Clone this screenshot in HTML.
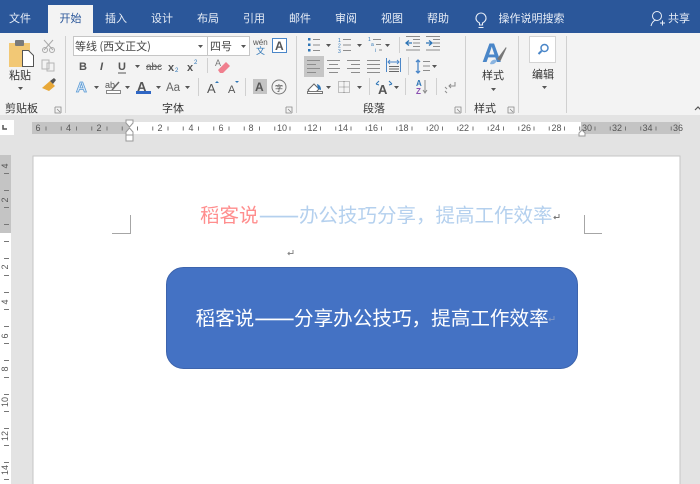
<!DOCTYPE html>
<html lang="zh-CN"><head><meta charset="utf-8"><title>Word</title>
<style>
html,body{margin:0;padding:0;width:700px;height:484px;overflow:hidden;background:#e3e3e3}
svg{display:block;position:absolute;left:0;top:0;filter:blur(.3px)}
text{font-family:"Liberation Sans","Noto Sans CJK SC",sans-serif;fill:#444;font-size:11px}
.cjk{font-family:"Noto Sans CJK SC","WenQuanYi Zen Hei",sans-serif}
.tab{fill:#e8eef7;font-size:11px;text-anchor:middle}
.lb{font-size:11px;fill:#333;text-anchor:middle}
.b{font-weight:bold;fill:#555}
.ln{stroke:#8c8c8c;stroke-width:1;fill:none}
.sep{stroke:#d0d0d0;stroke-width:1}
.bl{stroke:#4a86c8;stroke-width:1;fill:none}
.rl{font-size:9px;fill:#555;text-anchor:middle}
</style></head><body>
<svg width="700" height="484" viewBox="0 0 700 484" xmlns="http://www.w3.org/2000/svg">
<defs><path id="ar" d="M0 0h5l-2.500 3z" fill="#555"/>
<path id="dl" d="M0 0h6v6M0 0v6h6M2 2l3 3" fill="none" stroke="#888" stroke-width=".8"/></defs>
<rect width="700" height="484" fill="#e3e3e3"/>
<rect width="700" height="33" fill="#2b579a"/>
<rect y="33" width="700" height="82" fill="#f3f3f3"/>
<rect x="48" y="5" width="45" height="29" fill="#f3f3f3"/>
<g class="cjk">
<text class="tab cjk" x="20" y="22">文件</text>
<text class="tab cjk" x="70.500" y="22" style="fill:#2b579a">开始</text>
<text class="tab cjk" x="116" y="22">插入</text>
<text class="tab cjk" x="162" y="22">设计</text>
<text class="tab cjk" x="208" y="22">布局</text>
<text class="tab cjk" x="254" y="22">引用</text>
<text class="tab cjk" x="300" y="22">邮件</text>
<text class="tab cjk" x="346" y="22">审阅</text>
<text class="tab cjk" x="392" y="22">视图</text>
<text class="tab cjk" x="438" y="22">帮助</text>
<text class="tab cjk" x="531.500" y="22">操作说明搜索</text>
<text class="tab cjk" x="679" y="22">共享</text>
</g>
<path d="M481 25h-1.500v-2c-6-3-3.500-10 1.500-10s7.500 7 1.500 10v2z M478.500 27.500h5" fill="none" stroke="#e8eef7" stroke-width="1.100"/>
<circle cx="657" cy="16" r="4.500" fill="none" stroke="#e8eef7"/>
<path d="M651 26c1-4 3-5.500 5-6M660 23h5M662.500 20.500v5" fill="none" stroke="#e8eef7"/>

<!-- group separators -->
<path class="sep" d="M65.500 36v77M296.500 36v77M465.500 36v77M518.500 36v77M566.500 36v77"/>
<!-- clipboard -->
<rect x="9" y="43" width="21" height="24" fill="#f2c875"/>
<rect x="15" y="40" width="9" height="6" rx="1" fill="#7a7a7a"/>
<path d="M22.500 50.500h6l5 5v11h-11z" fill="#fff" stroke="#555"/>
<text class="lb cjk" x="20" y="79">粘贴</text>
<use href="#ar" x="18" y="87"/>
<path d="M44 40l9 10M53 40l-9 10" stroke="#aaa" fill="none"/><circle cx="45" cy="50" r="2.500" fill="none" stroke="#aaa"/><circle cx="52" cy="50" r="2.500" fill="none" stroke="#aaa"/>
<path d="M42 60h7v9h-7zM47 63h7v8h-7z" fill="#f3f3f3" stroke="#b5b5b5"/>
<path d="M42 88l8-7 5 5-6 5z" fill="#e8a838"/><path d="M50 81l4-3 2 2-3 4z" fill="#555"/>
<text class="lb cjk" x="21.500" y="112">剪贴板</text>
<use href="#dl" x="55" y="107"/>
<!-- font group -->
<rect x="73.500" y="36.500" width="134" height="19" fill="#fff" stroke="#c6c6c6"/>
<rect x="207.500" y="36.500" width="42" height="19" fill="#fff" stroke="#c6c6c6"/>
<text class="cjk" x="75" y="50" style="font-size:11px">等线 (西文正文)</text>
<text class="cjk" x="210" y="50" style="font-size:11px">四号</text>
<use href="#ar" x="198" y="45"/><use href="#ar" x="241" y="45"/>
<text x="253" y="45" style="font-size:8px;fill:#555">wén</text>
<text class="cjk" x="256" y="54" style="font-size:9px;fill:#2e75b6">文</text>
<rect x="272.500" y="38.500" width="14" height="14" fill="#fff" stroke="#4a86c8"/>
<text x="275" y="50" class="b" style="font-size:12px">A</text>
<text class="b" x="79" y="70">B</text>
<text x="100" y="70" style="font-style:italic;font-weight:bold;fill:#555">I</text>
<text class="b" x="118" y="70">U</text><path d="M118 73h8" stroke="#555"/>
<use href="#ar" x="135" y="65"/>
<text x="146" y="70" style="font-size:10px;fill:#555">abc</text><path d="M146 66.500h15" stroke="#666"/>
<text class="b" x="168" y="71">x</text><text x="175" y="72" style="font-size:6px;fill:#2e75b6">2</text>
<text class="b" x="187" y="71">x</text><text x="194" y="64" style="font-size:6px;fill:#2e75b6">2</text>
<path class="sep" d="M207.500 58v15"/>
<text x="215" y="66" style="font-size:9px;fill:#777">A</text>
<path d="M218 70l8-8 4 4-7 7h-3z" fill="#f07f8e"/>
<text x="76" y="92" style="font-size:15px;font-weight:bold;fill:#dce9f7;stroke:#5b9bd5;stroke-width:.8">A</text>
<use href="#ar" x="94" y="86"/>
<text x="105" y="88" style="font-size:9px;fill:#555">ab</text><path d="M112 90l7-8" stroke="#666" stroke-width="1.500"/>
<rect x="106.500" y="90.500" width="14" height="3" fill="#fff" stroke="#888"/>
<use href="#ar" x="125" y="86"/>
<text x="137" y="91" class="b" style="font-size:13px">A</text><rect x="136" y="91" width="15" height="3" fill="#2f66c4"/>
<use href="#ar" x="156" y="86"/>
<text x="166" y="91" style="font-size:11.500px;fill:#666">Aa</text>
<use href="#ar" x="185" y="86"/>
<path class="sep" d="M198.500 78v18"/>
<text x="207" y="93" style="font-size:13px;fill:#555">A</text><path d="M215 83l2-2 2 2z" fill="#2e75b6"/>
<text x="228" y="93" style="font-size:11px;fill:#555">A</text><path d="M235 81h4l-2 2z" fill="#2e75b6"/>
<path class="sep" d="M245.500 78v18"/>
<rect x="253" y="79" width="14" height="15" fill="#c4c4c4"/>
<text x="255" y="91" class="b" style="font-size:12px">A</text>
<circle cx="279" cy="87" r="7" fill="none" stroke="#777"/>
<text class="cjk" x="275" y="91" style="font-size:8px">字</text>
<text class="lb cjk" x="173" y="112">字体</text>
<use href="#dl" x="286" y="107"/>
<!-- paragraph -->
<g>
<rect x="308" y="38" width="2.500" height="2.500" fill="#2e75b6"/><rect x="308" y="43.500" width="2.500" height="2.500" fill="#2e75b6"/><rect x="308" y="49" width="2.500" height="2.500" fill="#2e75b6"/>
<path class="ln" d="M313 39.500h7M313 45h7M313 50.500h7"/>
<use href="#ar" x="326" y="44"/>
<text x="338" y="42" style="font-size:5px;fill:#2e75b6">1</text><text x="338" y="47.500" style="font-size:5px;fill:#2e75b6">2</text><text x="338" y="53" style="font-size:5px;fill:#2e75b6">3</text>
<path class="ln" d="M343 39.500h8M343 45h8M343 50.500h8"/>
<use href="#ar" x="357" y="44"/>
<text x="368" y="41" style="font-size:5px;fill:#2e75b6">1</text><text x="371" y="46" style="font-size:5px;fill:#2e75b6">a</text><text x="375" y="52" style="font-size:5px;fill:#2e75b6">i</text>
<path class="ln" d="M373 39.500h8M376 44.500h5M379 50h3"/>
<use href="#ar" x="385" y="44"/>
<path class="sep" d="M399.500 37v16"/>
<path class="ln" d="M413 39.500h7M413 43h7M413 46.500h7M406 50h14M406 36.500h14"/>
<path d="M412 43h-5M409 40.500l-3 2.500 3 2.500" stroke="#2e75b6" fill="none" stroke-width="1.300"/>
<path class="ln" d="M433 39.500h7M433 43h7M433 46.500h7M426 50h14M426 36.500h14"/>
<path d="M426 43h5M429 40.500l3 2.500-3 2.500" stroke="#2e75b6" fill="none" stroke-width="1.300"/>
<rect x="304" y="56" width="20" height="21" fill="#c6c6c6"/>
<path class="ln" d="M307 60.500h13M307 64.500h9M307 68.500h13M307 72.500h9"/>
<path class="ln" d="M327 60.500h13M329 64.500h9M327 68.500h13M329 72.500h9"/>
<path class="ln" d="M347 60.500h13M351 64.500h9M347 68.500h13M351 72.500h9"/>
<path class="ln" d="M367 60.500h13M367 64.500h13M367 68.500h13M367 72.500h13"/>
<path class="bl" d="M386.500 58v14M400.500 58v14M388 62h11M390 60l-2 2 2 2M397 60l2 2-2 2"/>
<path d="M389 66.500h10M389 69h10M389 71.500h10" stroke="#666"/>
<path class="sep" d="M408.500 57v18"/>
<path class="bl" d="M418 60v13M416 62l2-2 2 2M416 71l2 2 2-2" style="stroke-width:1.300"/>
<path class="ln" d="M423 61.500h7M423 66h7M423 70.500h7"/>
<use href="#ar" x="432" y="65"/>
<path d="M308 90l6-6 5 5-4 4h-4z" fill="#fff" stroke="#666"/><path d="M317 84c3 1 4 3 4 6l-3-1z" fill="#2e75b6"/>
<rect x="307.500" y="91.500" width="15" height="2" fill="#fff" stroke="#777"/>
<use href="#ar" x="326" y="86"/>
<path d="M338.500 81.500h11v11h-11zM344 81.500v11M338.500 87h11" fill="none" stroke="#888" stroke-dasharray="1 1"/>
<use href="#ar" x="357" y="86"/>
<path class="sep" d="M369.500 78v17"/>
<text x="378" y="94" class="b" style="font-size:13px">A</text>
<path d="M376 84l3-3M376 84l3 1M392 84l-3-3M392 84l-3 1" stroke="#2e75b6" fill="none"/>
<use href="#ar" x="394" y="86"/>
<path class="sep" d="M405.500 78v17"/>
<text x="416" y="86" style="font-size:8px;font-weight:bold;fill:#2e75b6">A</text>
<text x="416" y="94" style="font-size:8px;font-weight:bold;fill:#8a4fb0">Z</text>
<path class="ln" d="M425 80v13M423 90l2 3 2-3"/>
<path class="sep" d="M436.500 78v17"/>
<path class="ln" d="M455 82v4h-6M451 84l-2 2 2 2M445 87l2 2M445 91l2 2" />
</g>
<text class="lb cjk" x="374" y="112">段落</text>
<use href="#dl" x="455" y="107"/>
<!-- styles -->
<text x="482" y="62" style="font-size:27px;font-weight:bold;fill:#4a86c8">A</text>
<path d="M497 59l9-12 .5 1-6 13z" fill="#777"/><path d="M490 64c1-4 4-5 7-4-1 3-3 5-7 4z" fill="#8ab4e0"/>
<text class="lb cjk" x="493" y="79">样式</text>
<use href="#ar" x="491" y="88"/>
<text class="lb cjk" x="485" y="112">样式</text>
<use href="#dl" x="508" y="107"/>
<!-- editing -->
<rect x="529.500" y="36.500" width="26" height="26" fill="#fff" stroke="#d4d4d4"/>
<circle cx="544.500" cy="48" r="3.500" fill="none" stroke="#4a86c8" stroke-width="1.500"/>
<path d="M541.500 51l-3 3" stroke="#4a86c8" stroke-width="2"/>
<text class="lb cjk" x="543" y="78">编辑</text>
<use href="#ar" x="542" y="86"/>
<path d="M695 110l3-3 3 3" stroke="#555" fill="none" stroke-width="1.200"/>

<!-- horizontal ruler -->
<rect x="0" y="115" width="700" height="369" fill="#e3e3e3"/>
<rect x="0" y="120" width="14" height="15" fill="#fff"/>
<path d="M3 125v4h4" stroke="#555" stroke-width="1.500" fill="none"/>
<rect x="32" y="122" width="97" height="12" fill="#c4c4c4"/>
<rect x="129" y="122" width="452" height="12" fill="#fff"/>
<rect x="581" y="122" width="99" height="12" fill="#c4c4c4"/>
<line x1="45.500" x2="672" y1="128.500" y2="128.500" stroke="#777" stroke-width="4" stroke-dasharray="1 14.250"/>
<g>
<text class="rl" x="38" y="131">6</text><text class="rl" x="68.500" y="131">4</text><text class="rl" x="99" y="131">2</text>
<text class="rl" x="160" y="131">2</text><text class="rl" x="191" y="131">4</text><text class="rl" x="221" y="131">6</text>
<text class="rl" x="251" y="131">8</text><text class="rl" x="282" y="131">10</text><text class="rl" x="312.500" y="131">12</text>
<text class="rl" x="343" y="131">14</text><text class="rl" x="373" y="131">16</text><text class="rl" x="403.500" y="131">18</text>
<text class="rl" x="434" y="131">20</text><text class="rl" x="464" y="131">22</text><text class="rl" x="495" y="131">24</text>
<text class="rl" x="526" y="131">26</text><text class="rl" x="556.500" y="131">28</text><text class="rl" x="587" y="131">30</text>
<text class="rl" x="617" y="131">32</text><text class="rl" x="647.500" y="131">34</text><text class="rl" x="678" y="131">36</text>
</g>
<path d="M126 120h7v3l-3.500 4-3.500-4z M126 135v-3l3.500-4 3.500 4v3z" fill="#fff" stroke="#999"/>
<rect x="126" y="135" width="7" height="6" fill="#fff" stroke="#999"/>
<path d="M579 136v-3l3-3 3 3v3z" fill="#fff" stroke="#999"/>

<!-- vertical ruler -->
<rect x="0" y="155" width="11" height="78" fill="#c4c4c4"/>
<rect x="0" y="233" width="11" height="251" fill="#fff"/>
<line x1="6.500" x2="6.500" y1="173" y2="484" stroke="#777" stroke-width="5" stroke-dasharray="1 16"/>
<g>
<text class="rl" transform="translate(8 166) rotate(-90)">4</text>
<text class="rl" transform="translate(8 200) rotate(-90)">2</text>
<text class="rl" transform="translate(8 267) rotate(-90)">2</text>
<text class="rl" transform="translate(8 302) rotate(-90)">4</text>
<text class="rl" transform="translate(8 336) rotate(-90)">6</text>
<text class="rl" transform="translate(8 369) rotate(-90)">8</text>
<text class="rl" transform="translate(8 402) rotate(-90)">10</text>
<text class="rl" transform="translate(8 436) rotate(-90)">12</text>
<text class="rl" transform="translate(8 470) rotate(-90)">14</text>
</g>

<!-- page -->
<rect x="33" y="156" width="647" height="340" fill="#fff" stroke="#c6c6c6"/>
<path d="M130.500 215v18.500H112M584.500 215v18.500H602" fill="none" stroke="#a6a6a6"/>
<text class="cjk" x="200" y="222" style="font-size:19.500px;fill:#ff8e8e">稻客说</text>
<text class="cjk" x="259" y="222" textLength="40" lengthAdjust="spacingAndGlyphs" style="font-size:19.500px;fill:#b4d0ee;stroke:#b4d0ee;stroke-width:.4">——</text>
<text class="cjk" x="299" y="222" style="font-size:19.500px;fill:#b4d0ee">办公技巧分享，提高工作效率</text>
<path d="M559 214v3.500h-5M555.500 216l-1.500 1.500 1.500 1.500" fill="none" stroke="#777"/>
<path d="M293 250v3.500h-5M289.500 252l-1.500 1.500 1.500 1.500" fill="none" stroke="#888"/>
<rect x="166.500" y="267.500" width="411" height="101" rx="17" fill="#4472c4" stroke="#3d64ad"/>
<text class="cjk" x="195.500" y="325" style="font-size:19.600px;fill:#fff">稻客说</text>
<text class="cjk" x="254.500" y="325" textLength="40" lengthAdjust="spacingAndGlyphs" style="font-size:19.600px;fill:#fff;stroke:#fff;stroke-width:.4">——</text>
<text class="cjk" x="294" y="325" style="font-size:19.600px;fill:#fff">分享办公技巧，提高工作效率</text>
<path d="M554 316v3.500h-5M550.500 318l-1.500 1.500 1.500 1.500" fill="none" stroke="#7d95c4"/>
</svg>
</body></html>
